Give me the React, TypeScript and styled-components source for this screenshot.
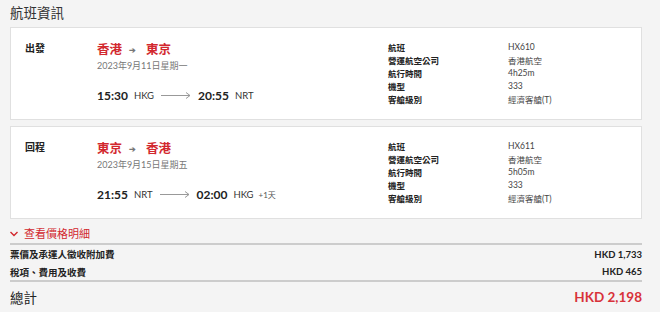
import React from "react";
import styled, { createGlobalStyle } from "styled-components";

const GlobalStyle = createGlobalStyle`
  body {
    margin: 0;
    background: #f4f4f4;
    font-family: Lato, "Noto Sans CJK TC", sans-serif;
    color: #333;
  }
`;

const Page = styled.div`
  width: 632px;
  padding: 3px 0 0 10px;
`;

const Title = styled.h2`
  margin: 0 0 4px;
  font-size: 13.5px;
  line-height: 20px;
  font-weight: 400;
  color: #333;
`;

const Card = styled.div`
  display: flex;
  background: #ffffff;
  border: 1px solid #e0e0e0;
  padding: 12px 14px 13px;
  height: 66px;
  margin-bottom: 6px;
`;

const Leg = styled.div`
  width: 72px;
  padding-top: 1px;
  font-size: 10px;
  line-height: 14px;
  font-weight: 700;
  color: #222;
`;

const Route = styled.div`
  flex: 1;
`;

const Cities = styled.div`
  display: flex;
  align-items: center;
  font-size: 12.5px;
  line-height: 20px;
  font-weight: 700;
  color: #d2282e;
`;

const SmallArrow = styled.span`
  color: #777;
  font-size: 8px;
  margin: 0 10px 0 7px;
`;

const DateText = styled.div`
  font-size: 9px;
  line-height: 12px;
  color: #777;
`;

const Times = styled.div`
  display: flex;
  align-items: center;
  margin-top: 13px;
  height: 20px;
`;

const Time = styled.span`
  font-size: 12px;
  font-weight: 700;
  color: #222;
`;

const Airport = styled.span`
  font-size: 9.5px;
  color: #333;
  margin-left: 6px;
`;

const NextDay = styled.span`
  font-size: 8px;
  color: #555;
  margin-left: 5px;
`;

const LineArrow = styled.svg`
  margin: 0 7px;
`;

const Details = styled.div`
  flex: 0 0 239px;
  display: grid;
  grid-template-columns: 120px 1fr;
  grid-auto-rows: 13px;
  align-items: center;
  font-size: 8.5px;
`;

const DetailLabel = styled.span`
  font-weight: 700;
  color: #222;
`;

const DetailValue = styled.span`
  color: #444;
`;

const Toggle = styled.div`
  display: flex;
  align-items: center;
  gap: 6px;
  margin-top: 2px;
  font-size: 11px;
  line-height: 18px;
  color: #d2282e;
`;

const Divider = styled.div`
  height: 2px;
  background: #cccccc;
`;

const PriceRow = styled.div<{ $h: number }>`
  display: flex;
  justify-content: space-between;
  align-items: center;
  height: ${(p) => p.$h}px;
  font-size: 9.5px;
  font-weight: 700;
  color: #222;
`;

const TotalRow = styled.div`
  display: flex;
  justify-content: space-between;
  align-items: center;
  height: 30px;
`;

const TotalLabel = styled.span`
  font-size: 13.5px;
  color: #222;
`;

const TotalAmount = styled.span`
  font-size: 13.5px;
  font-weight: 700;
  color: #d8323a;
`;

type Flight = {
  leg: string;
  from: string;
  to: string;
  date: string;
  dep: string;
  depCode: string;
  arr: string;
  arrCode: string;
  nextDay?: string;
  no: string;
  duration: string;
};

const flights: Flight[] = [
  {
    leg: "出發",
    from: "香港",
    to: "東京",
    date: "2023年9月11日星期一",
    dep: "15:30",
    depCode: "HKG",
    arr: "20:55",
    arrCode: "NRT",
    no: "HX610",
    duration: "4h25m",
  },
  {
    leg: "回程",
    from: "東京",
    to: "香港",
    date: "2023年9月15日星期五",
    dep: "21:55",
    depCode: "NRT",
    arr: "02:00",
    arrCode: "HKG",
    nextDay: "+1天",
    no: "HX611",
    duration: "5h05m",
  },
];

const FlightCard: React.FC<{ f: Flight }> = ({ f }) => {
  const rows: [string, string][] = [
    ["航班", f.no],
    ["營運航空公司", "香港航空"],
    ["航行時間", f.duration],
    ["機型", "333"],
    ["客艙級別", "經濟客艙(T)"],
  ];
  return (
    <Card>
      <Leg>{f.leg}</Leg>
      <Route>
        <Cities>
          {f.from}
          <SmallArrow>➔</SmallArrow>
          {f.to}
        </Cities>
        <DateText>{f.date}</DateText>
        <Times>
          <Time>{f.dep}</Time>
          <Airport>{f.depCode}</Airport>
          <LineArrow width="30" height="8" viewBox="0 0 30 8">
            <path d="M0 4.5 H29 M25 1.5 L29 4.5 L25 7.5" stroke="#999" strokeWidth="1" fill="none" />
          </LineArrow>
          <Time>{f.arr}</Time>
          <Airport>{f.arrCode}</Airport>
          {f.nextDay && <NextDay>{f.nextDay}</NextDay>}
        </Times>
      </Route>
      <Details>
        {rows.map(([k, v]) => (
          <React.Fragment key={k}>
            <DetailLabel>{k}</DetailLabel>
            <DetailValue>{v}</DetailValue>
          </React.Fragment>
        ))}
      </Details>
    </Card>
  );
};

export default function App() {
  return (
    <>
      <GlobalStyle />
      <Page>
        <Title>航班資訊</Title>
        {flights.map((f) => (
          <FlightCard key={f.no} f={f} />
        ))}
        <Toggle>
          <svg width="8" height="6" viewBox="0 0 8 6">
            <path d="M0.5 1 L4 4.5 L7.5 1" stroke="#d2282e" strokeWidth="1.4" fill="none" />
          </svg>
          查看價格明細
        </Toggle>
        <Divider />
        <PriceRow $h={18}>
          <span>票價及承運人徵收附加費</span>
          <span>HKD 1,733</span>
        </PriceRow>
        <PriceRow $h={17}>
          <span>稅項、費用及收費</span>
          <span>HKD 465</span>
        </PriceRow>
        <Divider />
        <TotalRow>
          <TotalLabel>總計</TotalLabel>
          <TotalAmount>HKD 2,198</TotalAmount>
        </TotalRow>
      </Page>
    </>
  );
}
